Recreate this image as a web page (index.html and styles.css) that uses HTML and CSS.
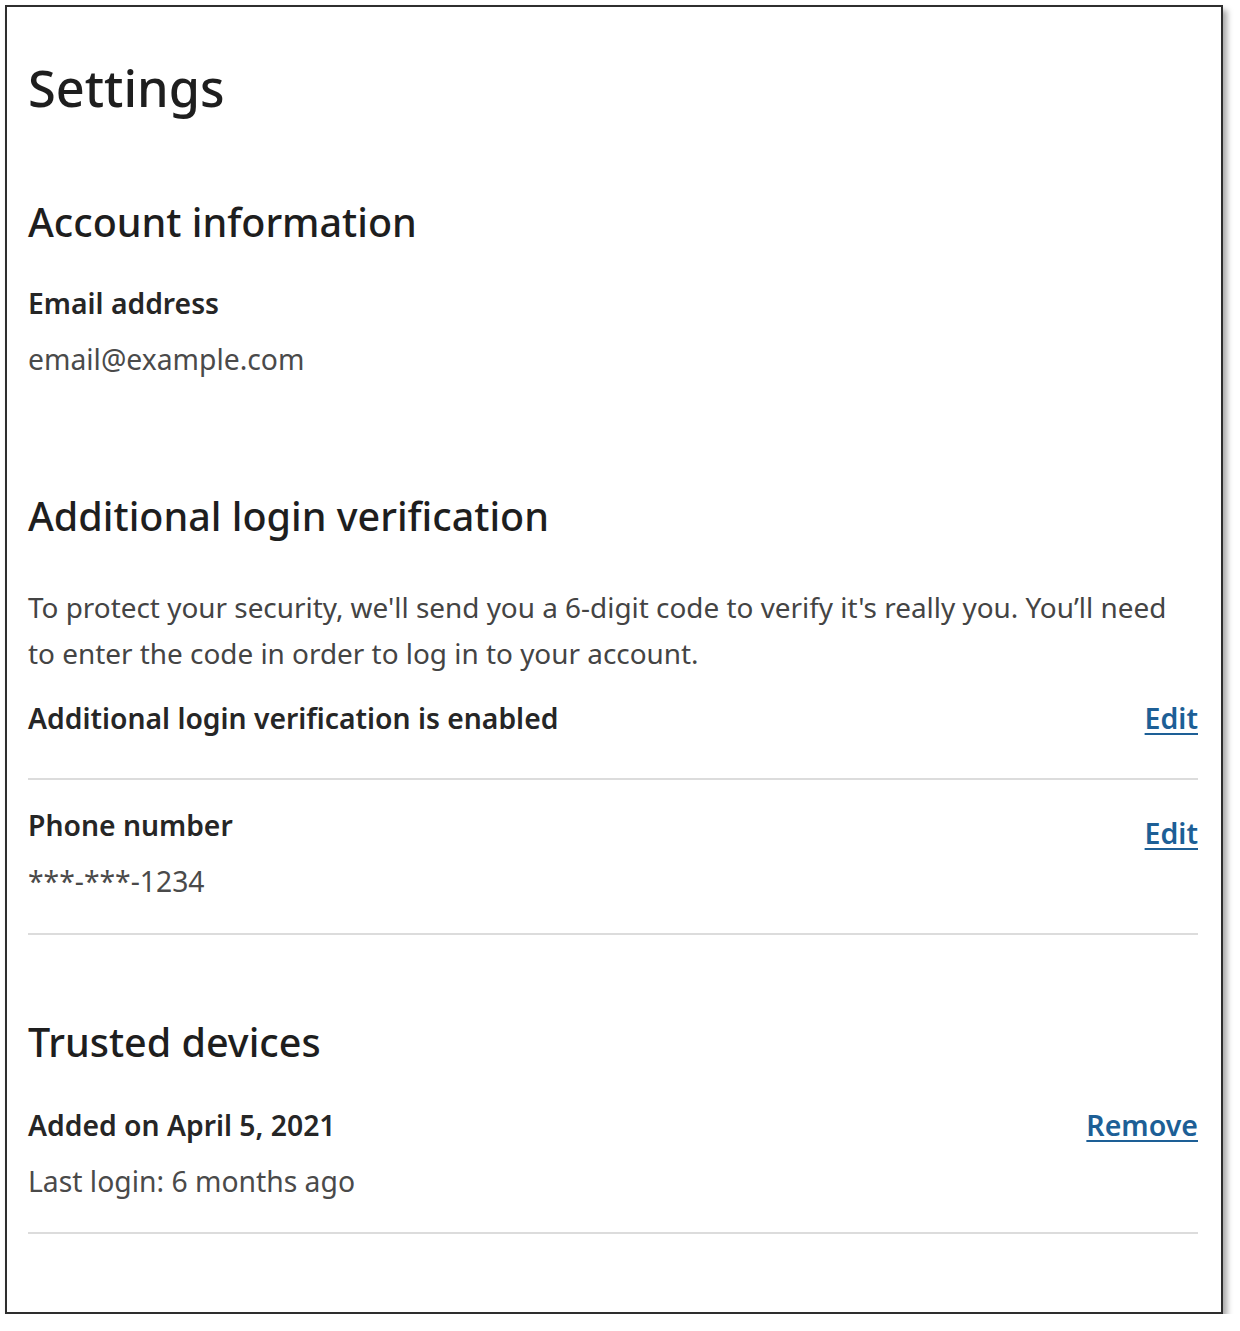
FILE: index.html
```html
<!DOCTYPE html>
<html lang="en">
<head>
<meta charset="utf-8">
<title>Settings</title>
<link rel="stylesheet" href="styles.css">
</head>
<body>
<main class="card">
  <h1 class="page-title">Settings</h1>

  <section class="section section-account">
    <h2 class="section-title">Account information</h2>
    <div class="field">
      <div class="field-label">Email address</div>
      <div class="field-value">email@example.com</div>
    </div>
  </section>

  <section class="section section-verification">
    <h2 class="section-title">Additional login verification</h2>
    <p class="description">To protect your security, we'll send you a 6-digit code to verify it's really you. You’ll need to enter the code in order to log in to your account.</p>
    <div class="row row-status">
      <div class="field-label">Additional login verification is enabled</div>
      <a class="action" href="#">Edit</a>
    </div>
    <div class="row row-phone">
      <div class="field">
        <div class="field-label">Phone number</div>
        <div class="field-value">***-***-1234</div>
      </div>
      <a class="action action-low" href="#">Edit</a>
    </div>
  </section>

  <section class="section section-devices">
    <h2 class="section-title">Trusted devices</h2>
    <div class="row row-device">
      <div class="field">
        <div class="field-label">Added on April 5, 2021</div>
        <div class="field-value">Last login: 6 months ago</div>
      </div>
      <a class="action" href="#">Remove</a>
    </div>
  </section>
</main>
</body>
</html>
```

FILE: styles.css
```css
html, body {
  margin: 0;
  padding: 0;
  background: #ffffff;
}

body {
  font-family: "Noto Sans", "Open Sans", "DejaVu Sans", sans-serif;
  color: #222222;
  padding: 5px 0 0 5px;
}

.card {
  box-sizing: border-box;
  width: 1218px;
  height: 1309px;
  border: 2px solid #2e2e2e;
  background: #ffffff;
  box-shadow: 4px 5px 6px rgba(0, 0, 0, 0.35);
  padding: 52px 23px 0 21px;
}

.page-title {
  margin: 0;
  font-size: 50.5px;
  font-weight: 500;
  line-height: 58px;
  color: #1e1e1e;
}

.section-title {
  margin: 0;
  font-size: 39.5px;
  font-weight: 500;
  line-height: 44px;
  color: #1e1e1e;
}

.section-account {
  margin-top: 83px;
}

.section-account .field {
  margin-top: 41px;
}

.field-label {
  font-size: 28.3px;
  font-weight: 600;
  line-height: 36px;
  color: #262626;
}

.field-value {
  margin-top: 20px;
  font-size: 28.3px;
  line-height: 36px;
  color: #4a4a4a;
}

.section-verification {
  margin-top: 117px;
}

.description {
  margin: 46px 0 0;
  max-width: 1175px;
  font-size: 27.9px;
  line-height: 46px;
  color: #444444;
}

.row {
  display: flex;
  justify-content: space-between;
  align-items: flex-start;
  border-bottom: 2px solid #dcdcdc;
}

.row-status {
  margin-top: 24px;
  padding-bottom: 42px;
}

.row-phone {
  padding-top: 27px;
  padding-bottom: 34px;
}

.section-devices {
  margin-top: 85px;
}

.row-device {
  margin-top: 43px;
  padding-bottom: 33px;
}

.action {
  font-size: 28.5px;
  font-weight: 600;
  line-height: 36px;
  color: #1d5f96;
  text-decoration: underline;
  text-decoration-thickness: 2px;
  text-underline-offset: 4px;
}

.action-low {
  margin-top: 8px;
}
```
